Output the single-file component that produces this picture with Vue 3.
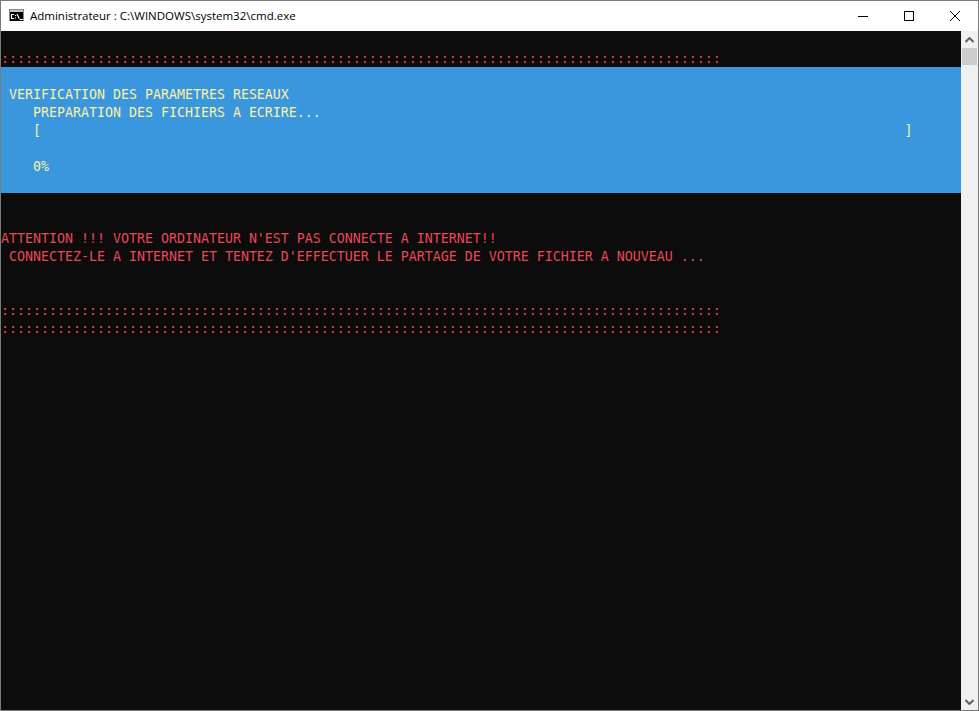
<script setup>
const rows = [
  { text: '' },
  { text: ':'.repeat(90), tone: 'red' },
  { text: '', tone: 'band' },
  { text: ' VERIFICATION DES PARAMETRES RESEAUX', tone: 'band' },
  { text: '    PREPARATION DES FICHIERS A ECRIRE...', tone: 'band' },
  { text: '    [' + ' '.repeat(108) + ']', tone: 'band' },
  { text: '', tone: 'band' },
  { text: '    0%', tone: 'band' },
  { text: '', tone: 'band' },
  { text: '' },
  { text: '' },
  { text: 'ATTENTION !!! VOTRE ORDINATEUR N\'EST PAS CONNECTE A INTERNET!!', tone: 'red' },
  { text: ' CONNECTEZ-LE A INTERNET ET TENTEZ D\'EFFECTUER LE PARTAGE DE VOTRE FICHIER A NOUVEAU ...', tone: 'red' },
  { text: '' },
  { text: '' },
  { text: ':'.repeat(90), tone: 'red' },
  { text: ':'.repeat(90), tone: 'red' },
]
</script>

<template>
  <div class="window">
    <header class="titlebar">
      <svg class="app-icon" width="16" height="14" viewBox="0 0 16 14">
        <rect x="0" y="0" width="15" height="12" fill="#000" />
        <path d="M0.5 12V0.5H14.5V12" stroke="#8c8c8c" fill="none" />
        <rect x="1" y="1" width="13" height="2" fill="#c4c4c4" />
        <path d="M5 5.5H2.5V9.5H5M6.5 6V7M6.5 8.5V9.5M8 5L10.2 9.5M10.5 10.5H14" stroke="#ffffff" stroke-width="1.2" fill="none" />
      </svg>
      <span class="title">Administrateur : C:\WINDOWS\system32\cmd.exe</span>
      <div class="controls">
        <button class="control">
          <svg width="10" height="10" viewBox="0 0 10 10"><path d="M0 5.5h10" stroke="#000" fill="none" /></svg>
        </button>
        <button class="control">
          <svg width="10" height="10" viewBox="0 0 10 10"><rect x="0.5" y="0.5" width="9" height="9" stroke="#000" fill="none" /></svg>
        </button>
        <button class="control">
          <svg width="10" height="10" viewBox="0 0 10 10"><path d="M0 0l10 10M10 0L0 10" stroke="#000" stroke-width="1" fill="none" /></svg>
        </button>
      </div>
    </header>
    <main class="body">
      <section class="console">
        <div v-for="(row, i) in rows" :key="i" class="row" :class="row.tone">{{ row.text }}</div>
      </section>
      <aside class="scrollbar">
        <svg class="arrow" width="9" height="6" viewBox="0 0 9 6"><path d="M0.5 5L4.5 1L8.5 5" stroke="#606060" stroke-width="2" fill="none" /></svg>
        <div class="thumb"></div>
        <div class="track"></div>
        <svg class="arrow" width="9" height="6" viewBox="0 0 9 6"><path d="M0.5 1L4.5 5L8.5 1" stroke="#606060" stroke-width="2" fill="none" /></svg>
      </aside>
    </main>
  </div>
</template>

<style>
html, body { margin: 0; background: #0c0c0c; }
</style>

<style scoped>
.window {
  width: 979px;
  height: 711px;
  box-sizing: border-box;
  border: 1px solid #7a7a7a;
  display: flex;
  flex-direction: column;
  overflow: hidden;
  background: #fff;
}
.titlebar {
  height: 30px;
  flex: none;
  display: flex;
  align-items: center;
  background: #fff;
  padding-left: 8px;
}
.app-icon { flex: none; margin-right: 5px; }
.title {
  font: 11.5px/16px "Open Sans", "Liberation Sans", sans-serif;
  color: #000;
  white-space: nowrap;
}
.controls { margin-left: auto; display: flex; height: 30px; }
.control {
  width: 46px;
  height: 30px;
  border: 0;
  padding: 0;
  background: transparent;
  display: flex;
  align-items: center;
  justify-content: center;
}
.body { flex: 1; display: flex; min-height: 0; background: #0c0c0c; }
.console { flex: 1; min-width: 0; overflow: hidden; background: #0c0c0c; }
.row {
  height: 18px;
  font: 13.29px/20px "DejaVu Sans Mono", monospace;
  white-space: pre;
  color: #cccccc;
}
.red { color: #e74856; }
.band { background: #3a96dd; color: #f9f1a5; }
.scrollbar {
  width: 17px;
  flex: none;
  background: #f0f0f0;
  display: flex;
  flex-direction: column;
  align-items: center;
}
.arrow { flex: none; margin: 6px 0 5px; }
.thumb { width: 15px; height: 17px; background: #cdcdcd; flex: none; }
.track { flex: 1; }
</style>
